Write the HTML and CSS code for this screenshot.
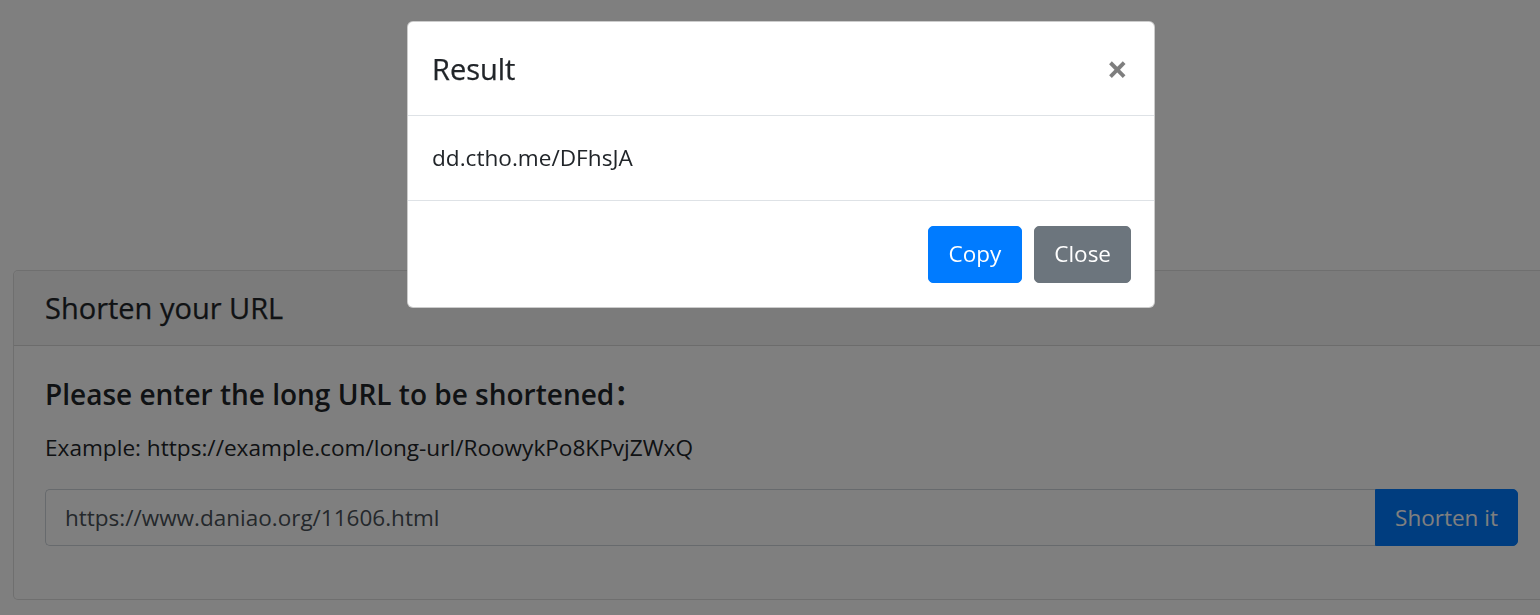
FILE: index.html
```html
<!DOCTYPE html>
<html lang="en">
<head>
<meta charset="utf-8">
<title>Shorten your URL</title>
<link rel="stylesheet" href="styles.css">
</head>
<body>
<main class="page">
  <section class="card">
    <header class="card-header">Shorten your URL</header>
    <div class="card-body">
      <h5 class="lead-title">Please enter the long URL to be shortened：</h5>
      <p class="example">Example: https://example.com/long-url/RoowykPo8KPvjZWxQ</p>
      <div class="input-group">
        <input class="url-input" type="text" value="https://www.daniao.org/11606.html">
        <button class="btn btn-primary btn-append" type="button">Shorten it</button>
      </div>
    </div>
  </section>
</main>

<div class="backdrop"></div>

<div class="modal" role="dialog">
  <div class="modal-header">
    <h5 class="modal-title">Result</h5>
    <button class="close" type="button" aria-label="Close">×</button>
  </div>
  <div class="modal-body">dd.ctho.me/DFhsJA</div>
  <div class="modal-footer">
    <button class="btn btn-primary" type="button">Copy</button>
    <button class="btn btn-secondary" type="button">Close</button>
  </div>
</div>
</body>
</html>
```

FILE: styles.css
```css
html, body {
  margin: 0;
  padding: 0;
  overflow: hidden;
  background: #fff;
}
body {
  font-family: "Open Sans", "Noto Sans", "Liberation Sans", "Noto Sans CJK SC", sans-serif;
  color: #212529;
  font-size: 22.6px;
  line-height: 1.5;
  height: 615px;
}
.page {
  padding: 270px 0 0 13px;
}
.card {
  width: 1537px;
  border: 1px solid rgba(0,0,0,.125);
  border-radius: 5px;
  background: #fff;
}
.card-header {
  height: 74px;
  display: flex;
  align-items: center;
  padding: 0 31px;
  font-size: 29px;
  font-weight: 500;
  -webkit-text-stroke: 0.25px #212529;
  background: rgba(0,0,0,.03);
  border-bottom: 1px solid rgba(0,0,0,.125);
  border-radius: 5px 5px 0 0;
}
.card-body {
  padding: 31px 31px 33px 31px;
}
.lead-title {
  margin: 0 0 22px;
  font-size: 28px;
  font-weight: 600;
  line-height: 34px;
}
.example {
  margin: 0 0 26px;
  font-size: 22.6px;
  line-height: 30px;
}
.input-group {
  display: flex;
  width: 1473px;
  margin-bottom: 20px;
}
.url-input {
  flex: 1;
  height: 57px;
  box-sizing: border-box;
  border: 1px solid #ced4da;
  border-right: none;
  border-radius: 5px 0 0 5px;
  padding: 0 19px;
  font: inherit;
  font-size: 22.5px;
  color: #495057;
  background: #fff;
}
.btn {
  font: inherit;
  font-size: 22.5px;
  line-height: 30px;
  border: 1px solid transparent;
  border-radius: 5px;
  padding: 12px 20px;
  color: #fff;
  cursor: pointer;
}
.btn-primary { background: #007bff; border-color: #007bff; }
.btn-secondary { background: #6c757d; border-color: #6c757d; }
.btn-append {
  width: 143px;
  height: 57px;
  padding: 0;
  border-radius: 0 5px 5px 0;
}
.backdrop {
  position: fixed;
  inset: 0;
  background: rgba(0,0,0,.5);
}
.modal {
  position: fixed;
  top: 21px;
  left: 407px;
  width: 748px;
  box-sizing: border-box;
  background: #fff;
  border: 1px solid rgba(0,0,0,.2);
  border-radius: 6px;
  overflow: hidden;
}
.modal-header {
  height: 94px;
  box-sizing: border-box;
  display: flex;
  align-items: center;
  justify-content: space-between;
  padding: 0 24px;
  border-bottom: 1px solid #dee2e6;
}
.modal-title {
  margin: 0;
  font-size: 29px;
  font-weight: 500;
  -webkit-text-stroke: 0.25px #212529;
  line-height: 1.5;
}
.close {
  background: none;
  border: none;
  padding: 0;
  margin-right: 2px;
  font: inherit;
  font-size: 37px;
  font-weight: 700;
  line-height: 1;
  color: #000;
  opacity: .5;
}
.modal-body {
  height: 84px;
  box-sizing: border-box;
  display: flex;
  align-items: center;
  padding: 0 24px;
  font-size: 22.6px;
}
.modal-footer {
  height: 107px;
  box-sizing: border-box;
  display: flex;
  align-items: center;
  justify-content: flex-end;
  gap: 12px;
  padding: 0 23px;
  border-top: 1px solid #dee2e6;
}
.modal-footer .btn {
  height: 57px;
  padding: 0 20px;
}
.modal-footer .btn-secondary {
  padding: 0 19px;
}
```
